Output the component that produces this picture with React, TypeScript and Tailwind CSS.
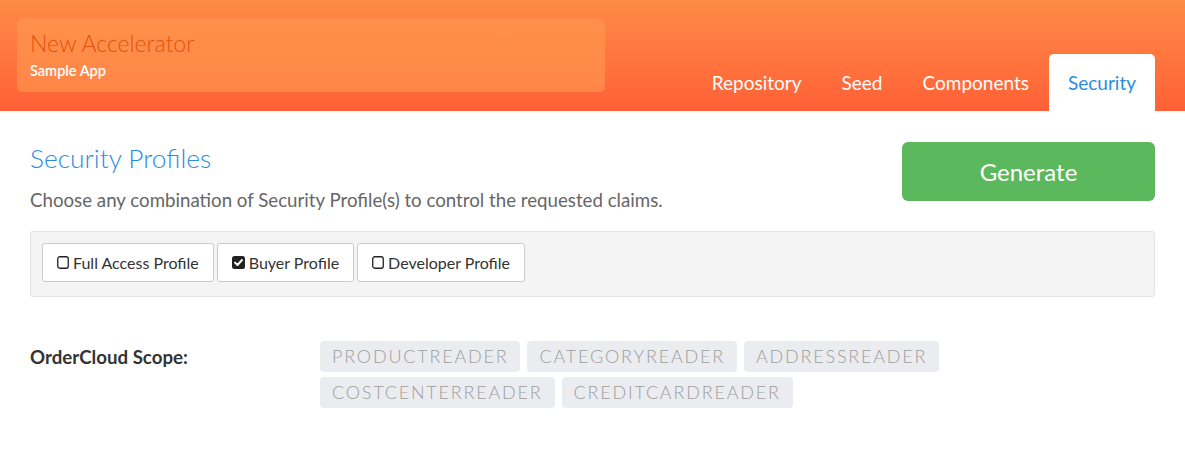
import React, { useState } from 'react';

const profiles = ['Full Access Profile', 'Buyer Profile', 'Developer Profile'];
const scopes = ['ProductReader', 'CategoryReader', 'AddressReader', 'CostCenterReader', 'CreditCardReader'];
const tabs = ['Repository', 'Seed', 'Components', 'Security'];

function Box({ checked }: { checked: boolean }) {
    if (checked) {
        return (
            <svg width="13" height="13" viewBox="0 0 13 13" className="shrink-0">
                <rect x="0" y="0" width="13" height="13" rx="2.5" fill="#222" />
                <path d="M3 6.6 L5.5 9 L10 4" stroke="#fff" strokeWidth="2" fill="none" strokeLinecap="round" strokeLinejoin="round" />
            </svg>
        );
    }
    return (
        <svg width="12" height="13" viewBox="0 0 12 13" className="shrink-0">
            <rect x="0.75" y="0.75" width="10.5" height="11.5" rx="2" fill="none" stroke="#222" strokeWidth="1.3" />
        </svg>
    );
}

export default function App() {
    const [selected, setSelected] = useState<string[]>(['Buyer Profile']);

    const toggle = (p: string) =>
        setSelected((s) => (s.includes(p) ? s.filter((x) => x !== p) : [...s, p]));

    return (
        <div className="w-[1185px] h-[457px] bg-white" style={{ fontFamily: 'Lato, "Open Sans", sans-serif' }}>
            {/* header */}
            <div className="h-[111px] flex justify-between items-end bg-gradient-to-b from-[#ff8b48] to-[#ff6036] pl-[17px] pr-[30px]">
                <div className="self-start mt-[19px] w-[588px] h-[73px] rounded-[5px] bg-[#ff9a50]/60 pl-[13px] pt-[10px]">
                    <div className="text-[23px] leading-[28px] font-light text-[#df5209]">New Accelerator</div>
                    <div className="text-[14.5px] leading-[20px] font-semibold text-white mt-[4px]">Sample App</div>
                </div>
                <div className="flex items-end">
                    {tabs.map((t) => (
                        <div
                            key={t}
                            className={
                                t === 'Security'
                                    ? 'h-[57px] px-[19px] pt-[15px] bg-white rounded-t-[5px] text-[19px] text-[#2b8ddb]'
                                    : 'h-[57px] px-[20px] pt-[15px] text-[19px] text-white'
                            }
                        >
                            {t}
                        </div>
                    ))}
                </div>
            </div>

            {/* body */}
            <div className="px-[30px]">
                <div className="flex justify-between">
                    <div>
                        <h2 className="mt-[31px] text-[26.3px] leading-[32px] font-light text-[#2b8ddb]">Security Profiles</h2>
                        <p className="mt-[14px] text-[18.7px] leading-[24px] text-[#666]">
                            Choose any combination of Security Profile(s) to control the requested claims.
                        </p>
                    </div>
                    <button className="mt-[31px] w-[253px] h-[59px] rounded-[6px] bg-[#5cb85c] text-white text-[24px]">
                        Generate
                    </button>
                </div>

                <div className="mt-[19px] h-[66px] border border-[#e3e3e3] bg-[#f4f4f4] rounded-[3px] px-[11px] pt-[11px] flex items-start gap-[3px]">
                    {profiles.map((p) => (
                        <button
                            key={p}
                            onClick={() => toggle(p)}
                            className="h-[39px] px-[14px] bg-white border border-[#ccc] rounded-[3px] flex items-center gap-[4px] text-[16px] text-[#333]"
                        >
                            <Box checked={selected.includes(p)} />
                            {p}
                        </button>
                    ))}
                </div>

                <div className="mt-[44px] flex">
                    <div className="w-[290px] shrink-0 pt-[4px] text-[18.7px] font-bold text-[#333] leading-[24px]">OrderCloud Scope:</div>
                    <div className="flex flex-wrap gap-x-[7px] gap-y-[5px] w-[640px]">
                        {scopes.map((s) => (
                            <span
                                key={s}
                                className="h-[31px] px-[12px] flex items-center rounded-[4px] bg-[#ebecf0] text-[18px] font-light uppercase tracking-[1.8px] text-[#9e9e9e]"
                            >
                                {s}
                            </span>
                        ))}
                    </div>
                </div>
            </div>
        </div>
    );
}
